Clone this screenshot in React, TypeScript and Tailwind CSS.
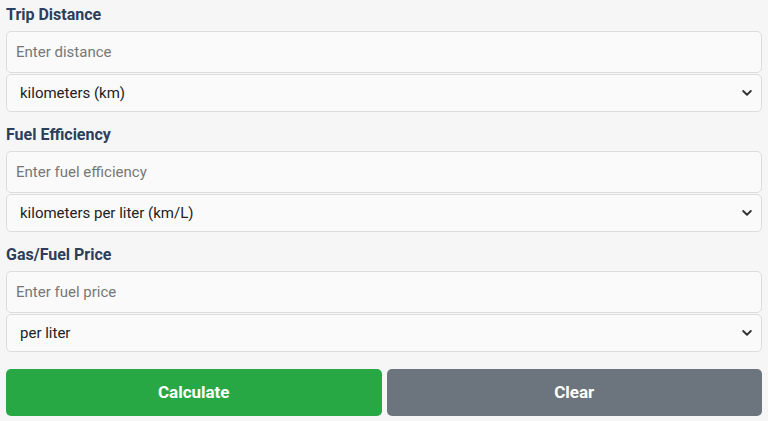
import React, { useState } from "react";

const font = { fontFamily: 'Roboto, "Liberation Sans", Arial, sans-serif' };

function Chevron() {
  return (
    <svg className="pointer-events-none absolute right-[10px] top-1/2 -translate-y-1/2" width="10" height="7" viewBox="0 0 10 7" fill="none">
      <path d="M1.2 1.5 5 5.2l3.8-3.7" stroke="#333" strokeWidth="1.9" strokeLinecap="round" strokeLinejoin="round" />
    </svg>
  );
}

type FieldProps = {
  label: string;
  placeholder: string;
  options: string[];
};

function Field({ label, placeholder, options }: FieldProps) {
  const [value, setValue] = useState("");
  const [unit, setUnit] = useState(options[0]);
  return (
    <div className="mb-[11px]">
      <label className="block h-[23px] pt-[1px] text-[16px] leading-[22px] font-bold text-[#2c3e5c] mb-[5px]">{label}</label>
      <input
        value={value}
        onChange={(e) => setValue(e.target.value)}
        placeholder={placeholder}
        className="block w-full h-[42px] rounded-[5px] border border-[#dcdcdc] bg-[#fafafa] px-[9px] text-[15px] text-[#222] placeholder:text-[#777] outline-none"
        style={font}
      />
      <div className="relative mt-[1px]">
        <select
          value={unit}
          onChange={(e) => setUnit(e.target.value)}
          className="block w-full h-[38px] appearance-none rounded-[5px] border border-[#dcdcdc] bg-[#fafafa] pl-[13px] text-[15px] text-[#222] outline-none"
          style={font}
        >
          {options.map((o) => (
            <option key={o}>{o}</option>
          ))}
        </select>
        <Chevron />
      </div>
    </div>
  );
}

export default function App() {
  return (
    <div className="min-h-screen bg-[#f6f6f6] px-[6px] pt-[3px]" style={font}>
      <Field label="Trip Distance" placeholder="Enter distance" options={["kilometers (km)", "miles (mi)"]} />
      <Field
        label="Fuel Efficiency"
        placeholder="Enter fuel efficiency"
        options={["kilometers per liter (km/L)", "miles per gallon (MPG)", "liters per 100 km (L/100km)"]}
      />
      <Field label="Gas/Fuel Price" placeholder="Enter fuel price" options={["per liter", "per gallon"]} />
      <div className="mt-[17px] flex gap-[5px]">
        <button className="flex-1 h-[47px] rounded-[5px] bg-[#28a745] text-[17px] font-bold text-white">Calculate</button>
        <button className="flex-1 h-[47px] rounded-[5px] bg-[#6c757d] text-[17px] font-bold text-white">Clear</button>
      </div>
    </div>
  );
}
